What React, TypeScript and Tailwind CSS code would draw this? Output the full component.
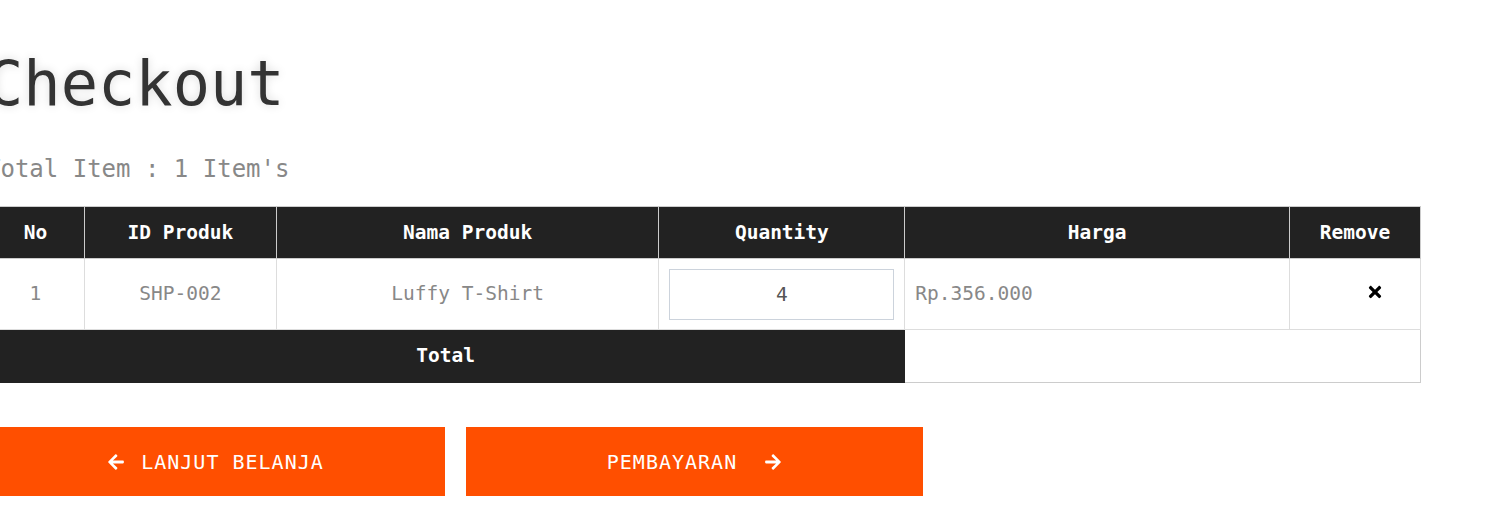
import { FaArrowLeft, FaArrowRight, FaTimes } from "react-icons/fa"

const items = [{ no: 1, id: "SHP-002", name: "Luffy T-Shirt", qty: 4, price: "Rp.356.000" }]

export default function App() {
  return (
    <div className="min-h-screen bg-white font-['DejaVu_Sans_Mono',monospace] overflow-hidden">
      <div className="ml-[-14px] w-[1435px] pt-[48px]">
        <h1 className="text-[62px] leading-[72px] text-[#333] [text-shadow:0_0_10px_rgba(0,0,0,0.15)]">
          Checkout
        </h1>
        <p className="mt-[34px] text-[24px] leading-[30px] text-[#888]">Total Item : 1 Item's</p>

        <table className="mt-[22px] w-full border-collapse text-[19.5px]">
          <thead>
            <tr className="h-[52px] bg-[#222] text-white font-bold">
              <th className="w-[98px] border border-[#ccc]">No</th>
              <th className="w-[192px] border border-[#ccc]">ID Produk</th>
              <th className="w-[383px] border border-[#ccc]">Nama Produk</th>
              <th className="w-[246px] border border-[#ccc]">Quantity</th>
              <th className="w-[385px] border border-[#ccc]">Harga</th>
              <th className="w-[131px] border border-[#ccc]">Remove</th>
            </tr>
          </thead>
          <tbody>
            {items.map((item) => (
              <tr key={item.id} className="h-[71px] text-[#888]">
                <td className="border border-[#ddd] text-center">{item.no}</td>
                <td className="border border-[#ddd] text-center">{item.id}</td>
                <td className="border border-[#ddd] text-center">{item.name}</td>
                <td className="border border-[#ddd] px-[10px]">
                  <input
                    type="text"
                    defaultValue={item.qty}
                    className="h-[51px] w-full border border-[#ccd3dc] text-center text-[19.5px] text-[#555] outline-none"
                  />
                </td>
                <td className="border border-[#ddd] px-[10px]">{item.price}</td>
                <td className="border border-[#ddd]">
                  <div className="flex justify-center pl-[39px] pb-[4px]">
                    <FaTimes className="text-black text-[18px]" />
                  </div>
                </td>
              </tr>
            ))}
            <tr className="h-[53px]">
              <td colSpan={4} className="bg-[#222] text-center font-bold text-white border border-[#222]">
                Total
              </td>
              <td colSpan={2} className="border border-[#ccc]"></td>
            </tr>
          </tbody>
        </table>

        <div className="mt-[44px] flex gap-[21px]">
          <button className="flex h-[69px] w-[459px] items-center justify-center gap-[16px] bg-[#ff4f00] text-[20px] tracking-[1px] text-white">
            <FaArrowLeft className="text-[18px]" />
            LANJUT BELANJA
          </button>
          <button className="flex h-[69px] w-[457px] items-center justify-center gap-[27px] bg-[#ff4f00] text-[20px] tracking-[1px] text-white">
            PEMBAYARAN
            <FaArrowRight className="text-[18px]" />
          </button>
        </div>
      </div>
    </div>
  )
}
